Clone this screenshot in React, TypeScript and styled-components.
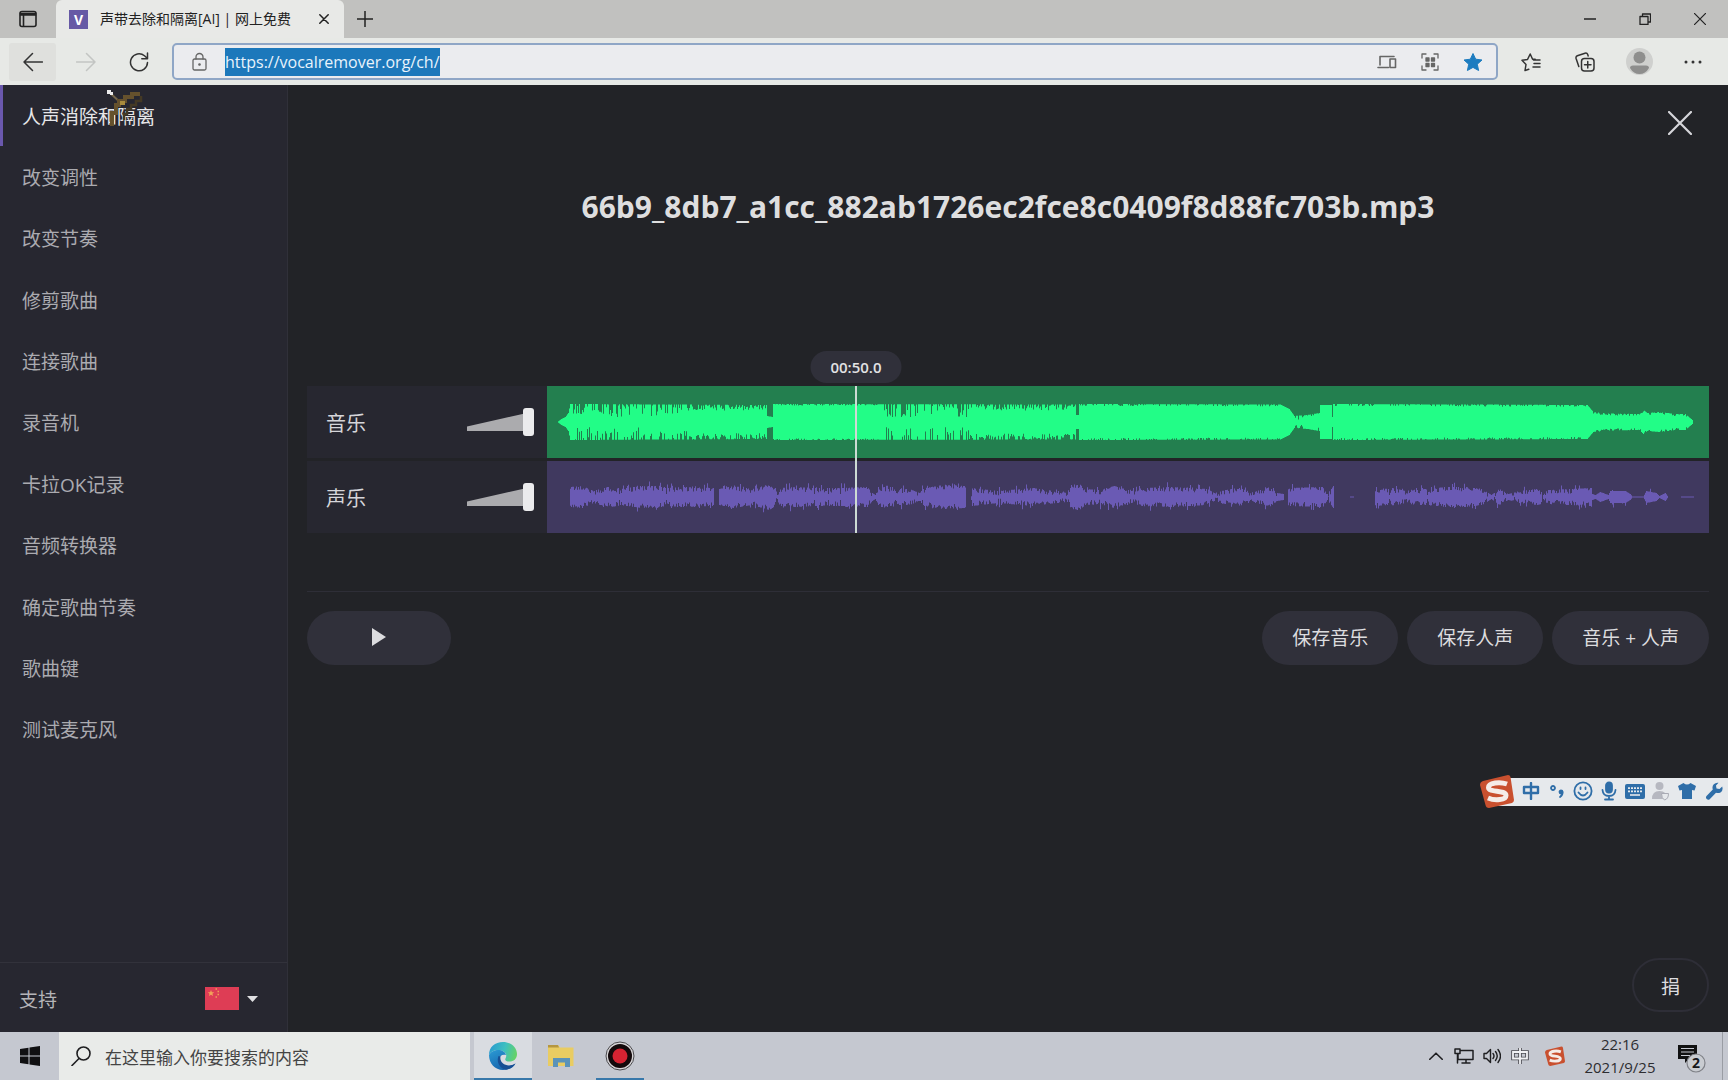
import React, { useState } from "react";
import styled, { createGlobalStyle } from "styled-components";

const font = `"Open Sans", "Noto Sans CJK SC", sans-serif`;

const GlobalStyle = createGlobalStyle`
  *, *::before, *::after { box-sizing: border-box; }
  body { margin: 0; background: #222327; font-family: ${font}; }
  button, input { font: inherit; color: inherit; }
  button { padding: 0; border: 0; background: none; cursor: pointer; }
  h1, ul, p { margin: 0; padding: 0; }
  ul { list-style: none; }
  a { color: inherit; text-decoration: none; }
`;

const Screen = styled.div`
  display: grid;
  grid-template-rows: 38px 47px 1fr 48px;
  min-height: 100vh;
`;

/* ---------- browser chrome ---------- */

const TabStrip = styled.header`
  display: flex;
  align-items: center;
  background: #c1c1bf;
  color: #222;
`;

const StripButton = styled.button<{ $width: number }>`
  display: grid;
  place-items: center;
  width: ${(p) => p.$width}px;
  height: 34px;
`;

const Tab = styled.div`
  display: flex;
  align-items: center;
  align-self: stretch;
  width: 288px;
  padding: 0 10px 0 13px;
  border-radius: 6px 6px 0 0;
  background: #e8e9e7;
`;

const Favicon = styled.span`
  width: 19px;
  height: 19px;
  background: #6659a5;
  color: #fff;
  font-size: 14px;
  font-weight: 700;
  line-height: 19px;
  text-align: center;
`;

const TabTitle = styled.span`
  flex: 1;
  padding-left: 12px;
  font-size: 14px;
  line-height: 20px;
  white-space: nowrap;
`;

const WindowButtons = styled.div`
  display: flex;
  margin-left: auto;
  padding-right: 1px;
`;

const Toolbar = styled.div`
  display: flex;
  align-items: center;
  padding: 0 8px 0 9px;
  background: #e7e9e6;
  color: #333;
`;

const ToolButton = styled.button<{ $raised?: boolean; $faded?: boolean }>`
  display: grid;
  place-items: center;
  width: 47px;
  height: 38px;
  margin-right: 6px;
  border-radius: 3px;
  background: ${(p) => (p.$raised ? "#dfe0dd" : "none")};
  color: ${(p) => (p.$faded ? "#c3c5c3" : "inherit")};
`;

const AddressBox = styled.div`
  display: flex;
  flex: 1;
  align-items: center;
  height: 37px;
  margin-left: 4px;
  padding: 0 2px 0 18px;
  border: 2px solid #8fa6c6;
  border-radius: 5px;
  background: #ebecef;
  color: #666;
`;

const AddressField = styled.div`
  display: flex;
  flex: 1;
  padding-left: 18px;
`;

const AddressInput = styled.input`
  field-sizing: content;
  height: 28px;
  padding: 0;
  border: 0;
  outline: 0;
  background: #1c78bb;
  color: #e8f3fb;
  font-size: 16px;
`;

const AddressButton = styled.button`
  display: grid;
  place-items: center;
  width: 43px;
  height: 32px;
`;

const BarButtons = styled.div`
  display: flex;
  margin-left: 6px;
`;

const BarButton = styled.button`
  display: grid;
  place-items: center;
  width: 54px;
  height: 38px;
`;

/* ---------- site ---------- */

const Site = styled.div`
  display: grid;
  grid-template-columns: 288px 1fr;
  color: #d6d6da;
`;

const Sidebar = styled.aside`
  display: flex;
  flex-direction: column;
  border-right: 1px solid #303039;
  background: #272730;
`;

const Menu = styled.ul`
  display: grid;
  grid-auto-rows: 1fr;
  height: 675px;
`;

const MenuLink = styled.a<{ $active: boolean }>`
  display: flex;
  align-items: center;
  height: 100%;
  padding: 2px 19px 0;
  border-left: 3px solid ${(p) => (p.$active ? "#6a58ad" : "transparent")};
  color: ${(p) => (p.$active ? "#e6e6e8" : "#ababb0")};
  font-size: 19px;
  line-height: 28px;
`;

const SidebarFoot = styled.div`
  display: flex;
  align-items: center;
  justify-content: space-between;
  height: 70px;
  margin-top: auto;
  padding: 2px 29px 0 19px;
  border-top: 1px solid #32323b;
  color: #b4b4b8;
  font-size: 19px;
`;

const LanguageButton = styled.button`
  display: flex;
  align-items: center;
  gap: 8px;
`;

const Main = styled.main`
  display: flex;
  flex-direction: column;
  padding: 20px 19px;
  background: #222327;
`;

const CloseButton = styled.button`
  display: grid;
  place-items: center;
  align-self: flex-end;
  width: 58px;
  height: 36px;
`;

const FileName = styled.h1`
  margin-top: 44px;
  color: #dededf;
  font-size: 30px;
  font-weight: 700;
  line-height: 44px;
  text-align: center;
`;

const Editor = styled.section`
  display: grid;
  grid-template-columns: 240px 1fr;
  row-gap: 3px;
  margin-top: 157px;
`;

const TrackHead = styled.div`
  display: flex;
  align-items: center;
  justify-content: space-between;
  height: 72px;
  padding: 0 13px 0 19px;
  background: #272730;
  font-size: 20px;
`;

const TrackWave = styled.div<{ $tone: string }>`
  height: 72px;
  background: ${(p) => p.$tone};

  svg { display: block; width: 100%; height: 100%; }
`;

const Volume = styled.div`
  display: grid;
  align-items: center;
  width: 67px;
  height: 28px;

  &::before {
    content: "";
    grid-area: 1 / 1;
    width: 60px;
    height: 18px;
    background: #ababae;
    clip-path: polygon(0 75%, 100% 0, 100% 100%, 0 100%);
  }
`;

const VolumeInput = styled.input`
  z-index: 1;
  grid-area: 1 / 1;
  width: 100%;
  height: 28px;
  margin: 0;
  appearance: none;
  background: none;

  &::-webkit-slider-thumb {
    appearance: none;
    width: 11px;
    height: 28px;
    border-radius: 3px;
    background: #ebebed;
  }
`;

const Waves = styled.div`
  position: relative;
  display: grid;
  grid-row: 1 / span 2;
  grid-column: 2;
  row-gap: 3px;
`;

const Playhead = styled.div`
  position: absolute;
  top: 0;
  bottom: 0;
  width: 2px;
  background: #cddbd4;
`;

const TimePill = styled.output`
  position: absolute;
  bottom: 100%;
  left: 50%;
  width: 91px;
  margin-bottom: 3px;
  border-radius: 16px;
  background: #30303a;
  color: #e2e2e4;
  font-size: 15px;
  font-weight: 600;
  line-height: 32px;
  text-align: center;
  transform: translateX(-50%);
`;

const Actions = styled.div`
  display: flex;
  gap: 9px;
  margin-top: 58px;
  padding-top: 19px;
  border-top: 1px solid #2e2e37;
`;

const Pill = styled.button<{ $wide?: boolean }>`
  display: grid;
  place-items: center;
  height: 54px;
  padding: 0 ${(p) => (p.$wide ? 65 : 30)}px 2px;
  margin-right: ${(p) => (p.$wide ? "auto" : "0")};
  border-radius: 27px;
  background: #30303a;
  color: #dcdcdf;
  font-size: 19px;
`;

const DonateButton = styled.button`
  align-self: flex-end;
  width: 77px;
  height: 54px;
  margin-top: auto;
  padding-top: 2px;
  border: 2px solid #2e2e37;
  border-radius: 27px;
  color: #dcdcdf;
  font-size: 19px;
`;

/* ---------- taskbar ---------- */

const Taskbar = styled.footer`
  display: flex;
  background: #c5c8d0;
  color: #1e1e20;
`;

const StartButton = styled.button`
  display: grid;
  place-items: center;
  width: 59px;
`;

const SearchBox = styled.label`
  display: flex;
  align-items: center;
  gap: 14px;
  width: 411px;
  margin-right: 4px;
  padding: 0 12px;
  background: #e9ebe9;
`;

const SearchInput = styled.input`
  flex: 1;
  min-width: 0;
  padding: 2px 0 0;
  border: 0;
  outline: 0;
  background: none;
  font-size: 17px;

  &::placeholder { color: #444; opacity: 1; }
`;

const AppButton = styled.button<{ $focused?: boolean; $running?: boolean }>`
  display: grid;
  place-items: center;
  width: 58px;
  padding-top: 2px;
  border-bottom: 2px solid ${(p) => (p.$running ? "#3878aa" : "transparent")};
  background: ${(p) => (p.$focused ? "#d9dce1" : "none")};
  background-clip: padding-box;
`;

const RecorderButton = styled(AppButton)`
  width: 48px;
  margin-left: 6px;
`;

const Tray = styled.div`
  display: flex;
  align-items: center;
  margin-left: auto;
`;

const TrayButton = styled.button`
  display: grid;
  place-items: center;
  width: 28px;
  height: 48px;
`;

const SogouTrayButton = styled(TrayButton)`
  width: 42px;
`;

const Clock = styled.div`
  width: 88px;
  color: #2d2d30;
  font-size: 15px;
  line-height: 23px;
  text-align: center;
`;

const NoticeButton = styled.button`
  display: grid;
  place-items: center;
  width: 59px;
  height: 48px;
  padding: 6px 2px 0 0;
  border-right: 1px solid #9a9da4;
  margin-right: 5px;
`;

/* ---------- floating things ---------- */

const ImeBar = styled.div`
  position: fixed;
  right: 0;
  bottom: 272px;
  display: flex;
  align-items: center;
  height: 34px;
  color: #2f6ea8;
  background: linear-gradient(transparent 4px, #e6e9ec 4px, #e6e9ec 32px, transparent 32px) no-repeat 18px 0;
`;

const ImeButton = styled.button`
  display: grid;
  place-items: center;
  width: 26px;
  height: 34px;

  &:last-child { width: 28px; }
`;

const ImeLogo = styled(ImeButton)`
  width: 38px;
  justify-items: start;
`;

const Cursor = styled.svg`
  position: fixed;
  top: 90px;
  left: 106px;
  pointer-events: none;
`;

/* ---------- icons ---------- */

type IconProps = { size?: number; width?: number; children: React.ReactNode; box?: string; stroke?: number };

const Icon = ({ size = 20, width, children, box, stroke = 1.5 }: IconProps) => (
  <svg
    width={width ?? size}
    height={size}
    viewBox={box ?? `0 0 ${width ?? size} ${size}`}
    fill="none"
    stroke="currentColor"
    strokeWidth={stroke}
    strokeLinecap="round"
    strokeLinejoin="round"
    aria-hidden="true"
  >
    {children}
  </svg>
);

const SogouMark = ({ size }: { size: number }) => (
  <svg width={size} height={size} viewBox="0 0 34 34" aria-hidden="true">
    <path d="M3 7 28 1Q30 1 30.500 3L34 26Q34 28 32 29L9 34Q6 34 5.500 31L0 11Q0 8 3 7Z" fill="#c9502f" />
    <path
      d="M27 10C20 7.500 8.500 8.500 8.500 13.500C8.500 19 26 15.500 26 21.500C26 26 15 27 8 24"
      fill="none"
      stroke="#f5ece8"
      strokeWidth="5"
    />
  </svg>
);

const EdgeLogo = () => (
  <svg width="30" height="30" viewBox="0 0 30 30" aria-hidden="true">
    <defs>
      <linearGradient id="edgeTop" x1="0" x2="1" y1="0.300" y2="0.500">
        <stop offset="0" stopColor="#2a9bcf" />
        <stop offset="0.550" stopColor="#3dc0c0" />
        <stop offset="1" stopColor="#66d267" />
      </linearGradient>
      <linearGradient id="edgeSide" x1="0" x2="0.600" y1="0" y2="1">
        <stop offset="0" stopColor="#2b9bd4" />
        <stop offset="1" stopColor="#1561ab" />
      </linearGradient>
    </defs>
    <path d="M1 14C1 6 7 1 15 1C23.500 1 29 7 29 13C29 18 25.500 20.500 21.500 20.500C18 20.500 16.500 19 17.500 17.500C20 13 16 9 10.500 9C6 9 2.500 11 1 14Z" fill="url(#edgeTop)" />
    <path d="M1 14C2.500 11 6 9 10.500 9C14 9 17.500 11 18 14C12 12.500 10 18 13 22C16.500 26.500 23 26 27.500 22.500C25 27 20.500 29 15 29C7 29 1 22.500 1 14Z" fill="url(#edgeSide)" />
    <path d="M10.500 15C8 21 12 28 18 28.700C22.500 28 26 25.500 27.500 22.500C20 27 11 23 12.500 15.500Z" fill="#174f94" />
  </svg>
);

/* ---------- wave forms ---------- */

// [x, height] pairs: the level is interpolated between neighbours
type Level = [number, number];
// [from, to, depth, chance]: notches cut into the level
type Notch = [number, number, number, number];

const musicLevels: Level[] = [
  [10, 0], [14, 3], [18, 5], [21, 9], [23, 18], [219, 17], [220, 6], [225, 5], [226, 18], [528, 17.5],
  [529, 7], [531, 7], [532, 18], [733, 17.5], [742, 13], [747, 6], [760, 7], [772, 9], [773, 17],
  [784, 17], [785, 5], [786, 18], [1040, 17], [1046, 10], [1060, 8.5], [1092, 8], [1096, 12], [1100, 9],
  [1112, 10], [1128, 8], [1138, 8], [1145, 2], [1146, 0],
];
const musicNotches: Notch[] = [
  [24, 110, 13, 0.42], [110, 140, 9, 0.45], [140, 219, 6, 0.7], [332, 422, 13, 0.36], [422, 528, 6, 0.6],
  [226, 332, 1.5, 0.5], [533, 733, 2, 0.4], [786, 1040, 2, 0.4], [748, 772, 4, 0.3], [1046, 1140, 2, 0.5],
];

const voiceLevels: Level[] = [
  [22, 0], [23, 10], [35, 11], [46, 6], [60, 10], [71, 9], [72, 3], [73, 8], [94, 11], [110, 11], [118, 9],
  [119, 3], [120, 9], [135, 10], [166, 9], [167, 0], [171, 0], [172, 8], [186, 11], [205, 8], [222, 13],
  [228, 9], [230, 2], [232, 9], [250, 10], [266, 9], [267, 3], [268, 9], [280, 9], [281, 3], [282, 9],
  [292, 9], [293, 3], [294, 9], [320, 10], [325, 4], [328, 2], [332, 10], [346, 10], [349, 4], [352, 8],
  [362, 8], [372, 4], [377, 9], [396, 12], [418, 11], [419, 0], [423, 0], [425, 9], [450, 6], [486, 9],
  [500, 7], [520, 5], [524, 12], [532, 13], [538, 8], [552, 7], [567, 11], [584, 6], [595, 9], [625, 10],
  [660, 8], [667, 4], [678, 7], [692, 9], [704, 5], [718, 8], [722, 10], [730, 4], [736, 3], [737, 0],
  [740, 0], [741, 9], [776, 10], [780, 3], [786, 11], [787, 0], [802, 0], [803, 0.6], [806, 0.6], [807, 0],
  [827, 0], [828, 9], [841, 8], [842, 2], [845, 9], [858, 6], [868, 8], [879, 8], [880, 2], [882, 8],
  [898, 10], [918, 10], [935, 8], [944, 2], [952, 8], [961, 3], [972, 6], [990, 8], [994, 7], [995, 0],
  [996, 2], [1000, 7], [1044, 9], [1045, 3], [1048, 2], [1053, 5], [1061, 2], [1063, 6], [1078, 6],
  [1083, 3], [1085, 0.5], [1096, 0.5], [1099, 6], [1109, 4], [1112, 1], [1118, 4], [1121, 0], [1133, 0],
  [1134, 0.5], [1146, 0.5], [1147, 0],
];
const voiceNotches: Notch[] = [[23, 1044, 4.5, 0.65]];

const makeWave = (levels: Level[], notches: Notch[], spikes: number) => {
  let seed = 41;
  const random = () => {
    seed = (seed * 16807) % 2147483647;
    return seed / 2147483647;
  };
  const levelAt = (x: number) => {
    const i = levels.findIndex((l) => l[0] > x);
    if (i < 1) return 0;
    const [x0, y0] = levels[i - 1];
    const [x1, y1] = levels[i];
    return y0 + ((y1 - y0) * (x - x0)) / (x1 - x0);
  };
  const side = () => {
    const points: Level[] = [];
    for (let x = levels[0][0]; x <= levels[levels.length - 1][0]; x += 1) {
      let y = levelAt(x);
      const notch = notches.find((n) => x >= n[0] && x < n[1]);
      if (y > 4 && notch && random() < notch[3]) y -= random() * notch[2];
      if (y > 5 && random() < spikes) y += random() * 5;
      // each sample is a one-pixel bar, so its level holds until the next one
      points.push([x, Math.max(y, 0)], [x + 1, Math.max(y, 0)]);
    }
    return points;
  };
  const top = side().map(([x, y]) => `${x} ${(36 - y).toFixed(1)}`);
  const bottom = side().reverse().map(([x, y]) => `${x} ${(36 + y).toFixed(1)}`);
  return `M${[...top, ...bottom].join("L")}Z`;
};

const tracks = [
  { name: "音乐", back: "#237f4f", fore: "#22fd87", path: makeWave(musicLevels, musicNotches, 0) },
  { name: "声乐", back: "#40395f", fore: "#6a5ab4", path: makeWave(voiceLevels, voiceNotches, 0.14) },
];

const menu = [
  "人声消除和隔离", "改变调性", "改变节奏", "修剪歌曲", "连接歌曲", "录音机",
  "卡拉OK记录", "音频转换器", "确定歌曲节奏", "歌曲键", "测试麦克风",
];

const star = "M10 1.500 12.700 7.200 19 8 14.300 12.200 15.600 18.500 10 15.400 4.400 18.500 5.700 12.200 1 8 7.300 7.200Z";

/* ---------- page ---------- */

const Browser = () => (
  <>
    <TabStrip>
      <StripButton $width={56} aria-label="标签操作">
        <Icon size={18} stroke={1.6}>
          <rect x="1" y="1.500" width="16" height="15" rx="2" />
          <path d="M1.500 3.500h15M1.500 5h15M4.500 5v11" />
        </Icon>
      </StripButton>
      <Tab>
        <Favicon>V</Favicon>
        <TabTitle>声带去除和隔离[AI] | 网上免费</TabTitle>
        <StripButton $width={20} aria-label="关闭标签页">
          <Icon size={10}><path d="m.800.800 8.400 8.400m0-8.400-8.400 8.400" /></Icon>
        </StripButton>
      </Tab>
      <StripButton $width={42} aria-label="新建标签页">
        <Icon size={16}><path d="M8 0v16M0 8h16" /></Icon>
      </StripButton>
      <WindowButtons>
        <StripButton $width={55} aria-label="最小化">
          <Icon size={12}><path d="M0 6h12" /></Icon>
        </StripButton>
        <StripButton $width={55} aria-label="还原">
          <Icon size={12} stroke={1.3}><path d="M1 3.500h8v8H1zM3.500 3.500V1h8v8H9" /></Icon>
        </StripButton>
        <StripButton $width={55} aria-label="关闭">
          <Icon size={12} stroke={1.2}><path d="m0 0 12 12M12 0 0 12" /></Icon>
        </StripButton>
      </WindowButtons>
    </TabStrip>

    <Toolbar>
      <ToolButton $raised aria-label="后退">
        <Icon><path d="M19.500 10H1M9.500 1.500 1 10l8.500 8.500" /></Icon>
      </ToolButton>
      <ToolButton $faded aria-label="前进">
        <Icon><path d="M.500 10H19M10.500 1.500 19 10l-8.500 8.500" /></Icon>
      </ToolButton>
      <ToolButton aria-label="刷新">
        <Icon><path d="M18.500 10.500A8.500 8.500 0 1 1 15.500 3.800L18.500 6.500M18.500 1v5.700h-5.700" /></Icon>
      </ToolButton>
      <AddressBox>
        <Icon width={15} size={20} stroke={1.3}>
          <rect x="1" y="7" width="13" height="11" rx="1.500" />
          <path d="M4 7V5a3.500 3.500 0 0 1 7 0v2" />
          <circle cx="7.500" cy="12.500" r=".700" fill="currentColor" />
        </Icon>
        <AddressField>
          <AddressInput aria-label="地址" defaultValue="https://vocalremover.org/ch/" />
        </AddressField>
        <AddressButton aria-label="发送到设备">
          <Icon size={16} width={20} stroke={1.6}>
            <path d="M3 11V2.500h14M1 13.500h10.500" />
            <rect x="13" y="5" width="5.500" height="8.500" />
          </Icon>
        </AddressButton>
        <AddressButton aria-label="二维码">
          <Icon size={18} stroke={1.3}>
            <path d="M1 5V1h4M13 1h4v4M17 13v4h-4M5 17H1v-4" />
            <path d="M5 5h3v3H5zM10.500 5h3v3h-3zM5 10.500h3v3H5zM10.500 10.500h3v3h-3z" fill="currentColor" />
          </Icon>
        </AddressButton>
        <AddressButton aria-label="已收藏">
          <svg width="20" height="20" viewBox="0 0 20 20" fill="#1d7cc0" stroke="#1d7cc0" aria-hidden="true"><path d={star} /></svg>
        </AddressButton>
      </AddressBox>
      <BarButtons>
        <BarButton aria-label="收藏夹">
          <Icon>
            <path d="M7.800 17.200 4 18.500l1-6L1 8.300l5.500-.800L9.200 2l2.400 5.200h2.600M12.500 8h6.500M13 11.500h6M12 15h7" />
          </Icon>
        </BarButton>
        <BarButton aria-label="集锦">
          <Icon>
            <rect x="6.500" y="6.500" width="12.500" height="12.500" rx="3" />
            <path d="M12.750 9.500v6.500M9.500 12.750H16M3.800 14.500 1 6.200Q.700 4.500 2.300 3.800L10 1.200Q12 .700 12.600 2.300L13.200 4" />
          </Icon>
        </BarButton>
        <BarButton aria-label="个人资料">
          <svg width="27" height="27" viewBox="0 0 27 27" aria-hidden="true">
            <circle cx="13.500" cy="13.500" r="13.500" fill="#cfd0ce" />
            <circle cx="13.500" cy="9.500" r="6" fill="#8e8e8d" />
            <path d="M4 20Q4 17.500 7 17.500h13q3 0 3 2.500-3.500 6-9.500 6T4 20Z" fill="#8e8e8d" />
          </svg>
        </BarButton>
        <BarButton aria-label="设置及其他">
          <Icon width={18} size={4} stroke={3}><path d="M2 2h0M9 2h0M16 2h0" /></Icon>
        </BarButton>
      </BarButtons>
    </Toolbar>
  </>
);

const Track = ({ name }: { name: string }) => (
  <TrackHead>
    <span>{name}</span>
    <Volume>
      <VolumeInput type="range" min={0} max={100} defaultValue={100} aria-label={`${name}音量`} />
    </Volume>
  </TrackHead>
);

const Player = () => (
  <Main>
    <CloseButton aria-label="关闭">
      <Icon size={24} stroke={2.200}><path d="m1 1 22 22M23 1 1 23" /></Icon>
    </CloseButton>
    <FileName>66b9_8db7_a1cc_882ab1726ec2fce8c0409f8d88fc703b.mp3</FileName>
    <Editor>
      {tracks.map((t) => <Track key={t.name} name={t.name} />)}
      <Waves>
        {tracks.map((t) => (
          <TrackWave key={t.name} $tone={t.back}>
            <svg viewBox="0 0 1162 72" preserveAspectRatio="none" aria-hidden="true"><path d={t.path} fill={t.fore} /></svg>
          </TrackWave>
        ))}
        <Playhead style={{ left: `${(308 / 1162) * 100}%` }}>
          <TimePill>00:50.0</TimePill>
        </Playhead>
      </Waves>
    </Editor>
    <Actions>
      <Pill $wide aria-label="播放">
        <Icon size={18} width={14} stroke={0}><path d="M0 0 14 9 0 18Z" fill="currentColor" /></Icon>
      </Pill>
      <Pill>保存音乐</Pill>
      <Pill>保存人声</Pill>
      <Pill>音乐 + 人声</Pill>
    </Actions>
    <DonateButton>捐</DonateButton>
  </Main>
);

const WindowsTaskbar = () => (
  <Taskbar>
    <StartButton aria-label="开始">
      <svg width="20" height="20" viewBox="0 0 20 20" fill="#101012" aria-hidden="true">
        <path d="M0 3 8.500 1.800v7.700H0zM9.500 1.600 20 0v9.500H9.500zM0 10.500h8.500v7.700L0 17zM9.500 10.500H20V20L9.500 18.400z" />
      </svg>
    </StartButton>
    <SearchBox>
      <Icon size={20} stroke={1.6}><circle cx="12.500" cy="7.500" r="6.500" /><path d="M8 12.500 1 19.500" /></Icon>
      <SearchInput type="text" aria-label="搜索" placeholder="在这里输入你要搜索的内容" />
    </SearchBox>
    <AppButton $focused $running aria-label="Edge"><EdgeLogo /></AppButton>
    <AppButton aria-label="文件资源管理器">
      <svg width="28" height="24" viewBox="0 0 28 24" aria-hidden="true">
        <path d="M1 1h10l2 2.500h13.500V22H1z" fill="#e9cc62" />
        <path d="M1 1h10l1 2.500H1z" fill="#b59640" />
        <path d="M6 23v-9h17v9h-5v-4.500h-7V23z" fill="#5b93b9" />
      </svg>
    </AppButton>
    <RecorderButton $running aria-label="录屏">
      <svg width="30" height="30" viewBox="0 0 30 30" aria-hidden="true">
        <circle cx="15" cy="15" r="14" fill="#d8d6d8" stroke="#4a4a4e" />
        <circle cx="15" cy="15" r="12" fill="#140a0c" />
        <circle cx="15" cy="15" r="7.500" fill="#d52332" />
      </svg>
    </RecorderButton>
    <Tray>
      <TrayButton aria-label="显示隐藏的图标">
        <Icon size={8} width={14} stroke={1.6}><path d="m.800 7.200 6.200-6 6.200 6" /></Icon>
      </TrayButton>
      <TrayButton aria-label="网络">
        <Icon size={16} width={20} stroke={1.5}><path d="M6 2.500h13v9H4V6M8 15h8M12 11.500V15M1 1h5v4.500H1zM3.500 6v9" /></Icon>
      </TrayButton>
      <TrayButton aria-label="音量">
        <Icon size={16} width={18} stroke={1.4}>
          <path d="M1 5.500h2.500l4-4v13l-4-4H1zM10 5.500q2 2.500 0 5M12.500 3.500q3.500 4.500 0 9M15 1.500q5 6.500 0 13" />
        </Icon>
      </TrayButton>
      <TrayButton aria-label="输入法">
        <svg width="18" height="18" viewBox="0 0 18 18" fill="none" aria-hidden="true">
          <path d="M2 5h14v6.500H2zM9 1v16" stroke="#4c4c52" strokeWidth="3.600" />
          <path d="M2 5h14v6.500H2zM9 1v16" stroke="#f2f3f5" strokeWidth="1.800" />
        </svg>
      </TrayButton>
      <SogouTrayButton aria-label="搜狗输入法"><SogouMark size={20} /></SogouTrayButton>
      <Clock>
        <p>22:16</p>
        <p>2021/9/25</p>
      </Clock>
      <NoticeButton aria-label="2 条新通知">
        <svg width="30" height="30" viewBox="0 0 30 30" aria-hidden="true">
          <path d="M1 1h19v14h-8l-4 4v-4H1z" fill="#111" />
          <path d="M4 4.500h13M4 8h13M4 11.500h9" stroke="#c5c8d0" strokeWidth="1.200" />
          <circle cx="19" cy="19" r="9" fill="#c9ccd1" stroke="#808288" strokeWidth="1.200" />
          <text x="19" y="24" textAnchor="middle" fontSize="14" fontWeight="700" fill="#17171a">2</text>
        </svg>
      </NoticeButton>
    </Tray>
  </Taskbar>
);

const InputMethodBar = () => (
  <ImeBar>
    <ImeLogo aria-label="搜狗"><SogouMark size={34} /></ImeLogo>
    <ImeButton aria-label="中文">
      <Icon size={18} stroke={2.400}><path d="M2 5h14v6H2zM9 1v16" /></Icon>
    </ImeButton>
    <ImeButton aria-label="标点">
      <Icon size={16} stroke={1.8}><circle cx="4" cy="5" r="2" /><circle cx="12" cy="9" r="1.500" fill="currentColor" /><path d="M13.500 9q.500 3-2.500 5" /></Icon>
    </ImeButton>
    <ImeButton aria-label="表情">
      <Icon size={20} stroke={1.8}><circle cx="10" cy="10" r="8.600" /><path d="M5.500 11.500q4.500 6 9 0M7.500 6.500v1.500M12.500 6.500v1.500" /></Icon>
    </ImeButton>
    <ImeButton aria-label="语音">
      <Icon size={20} width={16} stroke={1.8}>
        <rect x="5" y="1.500" width="6" height="10" rx="3" fill="currentColor" />
        <path d="M1.500 9q.500 6 6.500 6t6.500-6M8 15v3.500M4 18.500h8" />
      </Icon>
    </ImeButton>
    <ImeButton aria-label="键盘">
      <svg width="20" height="15" viewBox="0 0 20 15" aria-hidden="true">
        <rect width="20" height="15" rx="2" fill="currentColor" />
        <path d="M3 4.200h14M3 7.400h14" stroke="#e6e9ec" strokeWidth="1.800" strokeDasharray="2 1" />
        <path d="M5 11h10" stroke="#e6e9ec" strokeWidth="1.600" />
      </svg>
    </ImeButton>
    <ImeButton aria-label="账户">
      <svg width="18" height="20" viewBox="0 0 18 20" aria-hidden="true">
        <circle cx="7.500" cy="5" r="4" fill="#b6b8c0" />
        <path d="M0 18q0-8 7.500-8t7.500 8z" fill="#b6b8c0" />
        <path d="M9.500 12.500h7q0 5.500-4 6.500-3-1.500-3-6.500z" fill="#e6e9ec" stroke="#a9abb4" />
      </svg>
    </ImeButton>
    <ImeButton aria-label="皮肤">
      <svg width="18" height="18" viewBox="0 0 18 18" fill="currentColor" aria-hidden="true">
        <path d="M5.500 1Q9 4 12.500 1L18 4l-1.500 4.500-2.500-.500V17H4V8l-2.500.500L0 4z" />
      </svg>
    </ImeButton>
    <ImeButton aria-label="工具">
      <svg width="18" height="18" viewBox="0 0 18 18" fill="currentColor" aria-hidden="true">
        <path d="M13.500.800 11 3.500l.500 3 3 .500 2.700-2.600q1.300 4-1.700 6-2 1.200-4.500.400l-6.300 6.400q-1.600 1.200-3-.200t-.200-3L7.800 7.500Q6.800 4.500 8.800 2.300 10.800.300 13.500.800Z" />
      </svg>
    </ImeButton>
  </ImeBar>
);

const BowCursor = () => (
  <Cursor width="38" height="38" viewBox="0 0 38 38" aria-hidden="true">
    <path d="M3 2 16 14" stroke="#75674b" strokeWidth="2" />
    <path d="M1 0h4v2h2v3H4V4H1z" fill="#ececec" />
    <path d="M34 4h-8v3h-7v4h-6v4h-3v8H6v13" fill="none" stroke="#65512d" strokeWidth="4" />
    <path d="M35 6v5h-5v4h-5v4h-4v5h-3v6" fill="none" stroke="#443924" strokeWidth="2.500" />
    <path d="M14 11h5v4h-5z" fill="#a88b3d" />
  </Cursor>
);

export default function App() {
  const [active, setActive] = useState(0);
  return (
    <Screen>
      <GlobalStyle />
      <Browser />
      <Site>
        <Sidebar>
          <nav>
            <Menu>
              {menu.map((label, i) => (
                <li key={label}>
                  <MenuLink href="#" $active={i === active} onClick={() => setActive(i)}>{label}</MenuLink>
                </li>
              ))}
            </Menu>
          </nav>
          <SidebarFoot>
            <a href="#support">支持</a>
            <LanguageButton aria-label="语言">
              <svg width="34" height="23" viewBox="0 0 34 23" aria-hidden="true">
                <rect width="34" height="23" fill="#de3d55" />
                <path d="m6 3 .900 2.200 2.300.100-1.800 1.400.700 2.300L6 7.700 3.900 9l.700-2.300-1.800-1.400 2.300-.100z" fill="#f2a35a" />
                <path d="M10.500 2h1.500M12.500 4.500H14M12.500 7.500H14M10.500 10H12" stroke="#ef9a58" strokeWidth="1.300" />
              </svg>
              <svg width="11" height="6" viewBox="0 0 11 6" fill="#e0e0e2" aria-hidden="true"><path d="M0 0h11L5.500 6z" /></svg>
            </LanguageButton>
          </SidebarFoot>
        </Sidebar>
        <Player />
      </Site>
      <WindowsTaskbar />
      <InputMethodBar />
      <BowCursor />
    </Screen>
  );
}
